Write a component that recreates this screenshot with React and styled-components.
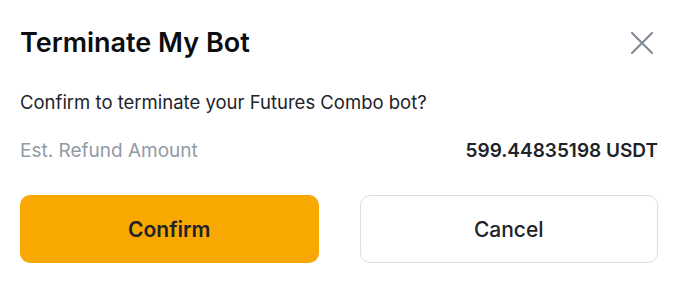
import React from 'react'
import styled, { createGlobalStyle } from "styled-components";

const Global = createGlobalStyle`
  body {
    margin: 0;
    background: #ffffff;
    font-family: Inter, "Noto Sans", sans-serif;
    color: #1e2329;
  }
`;

const Dialog = styled.div`
  width: 682px;
  height: 287px;
  box-sizing: border-box;
  padding: 24px 24px 0 20px;
  background: #ffffff;
`;

const Header = styled.div`
  display: flex;
  align-items: center;
  justify-content: space-between;
  height: 38px;
`;

const Title = styled.h1`
  margin: 0;
  font-size: 27px;
  font-weight: 600;
  line-height: 38px;
  color: #0b0e11;
`;

const CloseButton = styled.button`
  display: flex;
  align-items: center;
  justify-content: center;
  width: 32px;
  height: 32px;
  padding: 0;
  border: none;
  background: none;
  cursor: pointer;
`;

const Message = styled.p`
  margin: 26px 0 0;
  font-size: 18.5px;
  line-height: 28px;
  color: #1e2329;
`;

const InfoRow = styled.div`
  display: flex;
  justify-content: space-between;
  align-items: center;
  margin-top: 21px;
  font-size: 19px;
  line-height: 28px;
`;

const Label = styled.span`
  color: #929aa5;
`;

const Value = styled.span`
  font-weight: 600;
  color: #1e2329;
`;

const Actions = styled.div`
  display: grid;
  grid-template-columns: 1fr 1fr;
  gap: 41px;
  margin-top: 30px;
`;

const Button = styled.button`
  height: 68px;
  border-radius: 10px;
  font-family: inherit;
  font-size: 21px;
  font-weight: ${p => (p.$primary ? 600 : 500)};
  color: #1e2329;
  background: ${p => (p.$primary ? "#f8a800" : "#ffffff")};
  border: ${p => (p.$primary ? "none" : "1.5px solid #dcdee2")};
  cursor: pointer;
`;

export default function App() {
  return (
    <>
      <Global />
      <Dialog>
        <Header>
          <Title>Terminate My Bot</Title>
          <CloseButton aria-label="close">
            <svg width="22" height="22" viewBox="0 0 22 22">
              <path d="M1 1 L21 21 M21 1 L1 21" stroke="#7f8793" strokeWidth="2" strokeLinecap="round" />
            </svg>
          </CloseButton>
        </Header>
        <Message>Confirm to terminate your Futures Combo bot?</Message>
        <InfoRow>
          <Label>Est. Refund Amount</Label>
          <Value>599.44835198 USDT</Value>
        </InfoRow>
        <Actions>
          <Button $primary>Confirm</Button>
          <Button>Cancel</Button>
        </Actions>
      </Dialog>
    </>
  )
}
